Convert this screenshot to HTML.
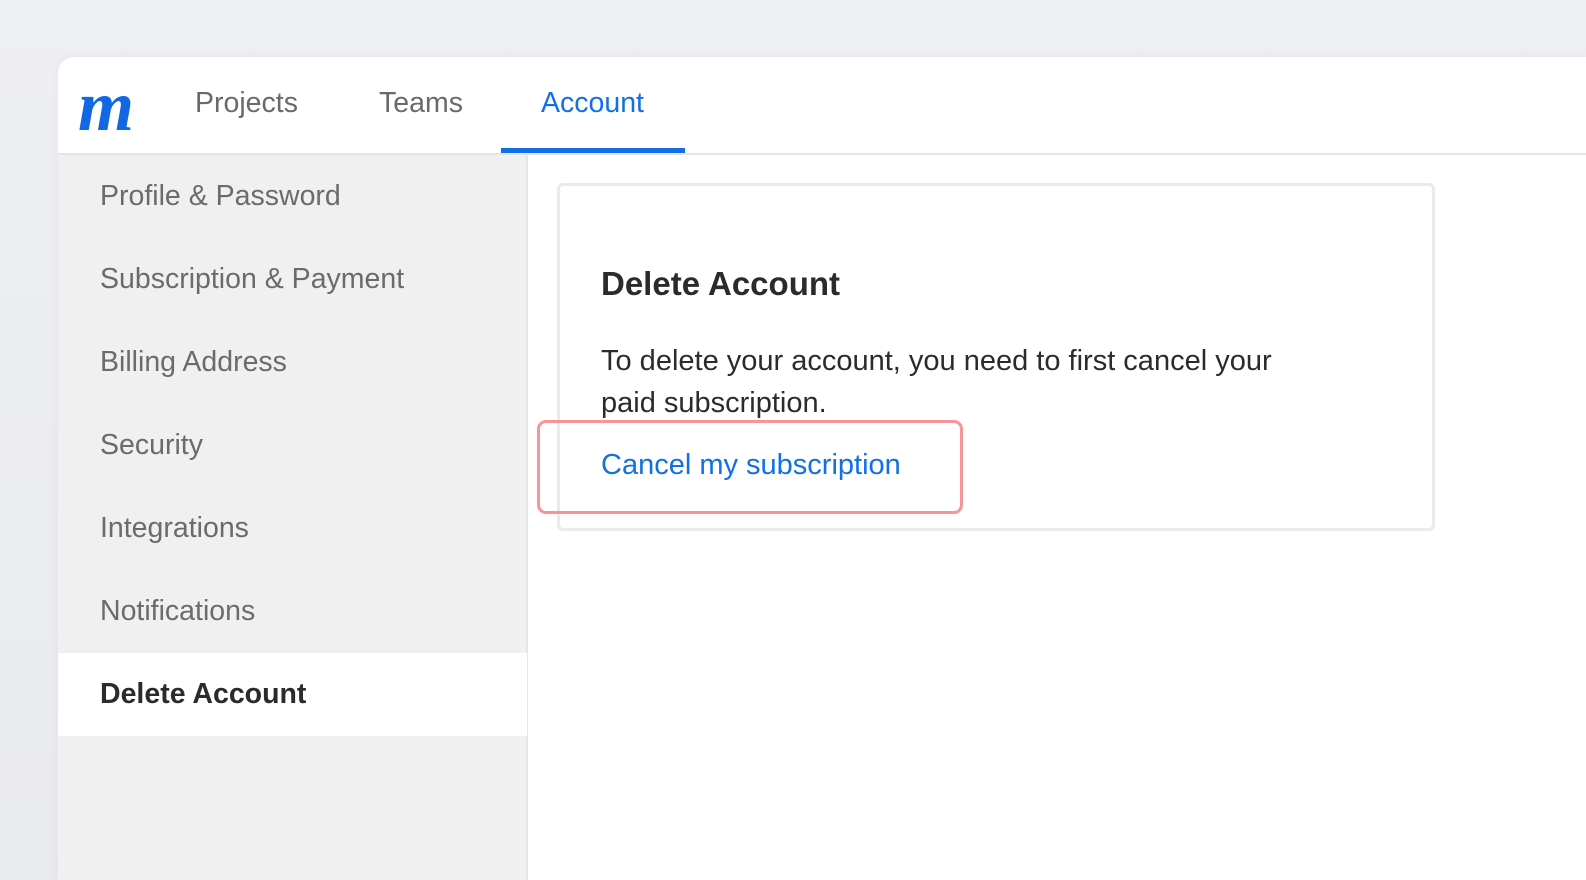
<!DOCTYPE html>
<html><head><style>
*{margin:0;padding:0;box-sizing:border-box}
html,body{width:1586px;height:880px;overflow:hidden}
body{background:linear-gradient(180deg,#eeeff2,#e9eaed);font-family:"Liberation Sans",sans-serif;position:relative}
.win{position:absolute;left:58px;top:57px;width:1528px;height:823px;background:#fff;border-radius:16px 0 0 0;overflow:hidden;box-shadow:0 0 12px rgba(0,0,0,0.04)}
.hdr{position:absolute;left:0;top:0;right:0;height:98px;border-bottom:2px solid #e4e4e4}
.logo{position:absolute;left:20px;top:8px;font-family:"Liberation Serif",serif;font-style:italic;font-weight:bold;font-size:72px;color:#1268e3;letter-spacing:-2px}
.nav{position:absolute;top:30px;font-size:28.5px;color:#6a6a6a}
.active{color:#1170e4}
.uline{position:absolute;left:443px;top:91px;width:184px;height:5px;background:#1170e4}
.side{position:absolute;left:0;top:98px;width:470px;height:730px;background:#f0f0f0;border-right:2px solid #e6e6e6}
.si{position:absolute;left:42px;font-size:28.5px;color:#6b6b6b}
.sel{position:absolute;left:0;top:498px;width:469px;height:83px;background:#fff}
.card{position:absolute;left:499px;top:126px;width:878px;height:348px;border:3px solid #ebebeb;border-radius:6px}
h1{position:absolute;left:543px;top:208px;font-size:33px;color:#2b2b2b}
.p{position:absolute;left:543px;top:283px;font-size:29px;color:#2b2b2b;line-height:42px}
.link{position:absolute;left:543px;top:392px;font-size:29px;color:#1170e4}
.hl{position:absolute;left:479px;top:363px;width:426px;height:94px;border:3px solid #f7939a;border-radius:9px}
</style></head><body>
<div class="win">
<div class="hdr">
<div class="logo">m</div>
<div class="nav" style="left:137px">Projects</div>
<div class="nav" style="left:321px">Teams</div>
<div class="nav active" style="left:483px">Account</div>
<div class="uline"></div>
</div>
<div class="side">
<div class="sel"></div>
<div class="si" style="top:25px">Profile &amp; Password</div>
<div class="si" style="top:108px">Subscription &amp; Payment</div>
<div class="si" style="top:191px">Billing Address</div>
<div class="si" style="top:274px">Security</div>
<div class="si" style="top:357px">Integrations</div>
<div class="si" style="top:440px">Notifications</div>
<div class="si" style="top:523px;font-weight:bold;color:#2b2b2b">Delete Account</div>
</div>
<div class="card"></div>
<h1>Delete Account</h1>
<div class="p">To delete your account, you need to first cancel your<br>paid subscription.</div>
<div class="link">Cancel my subscription</div>
<div class="hl"></div>
</div>
</body></html>
